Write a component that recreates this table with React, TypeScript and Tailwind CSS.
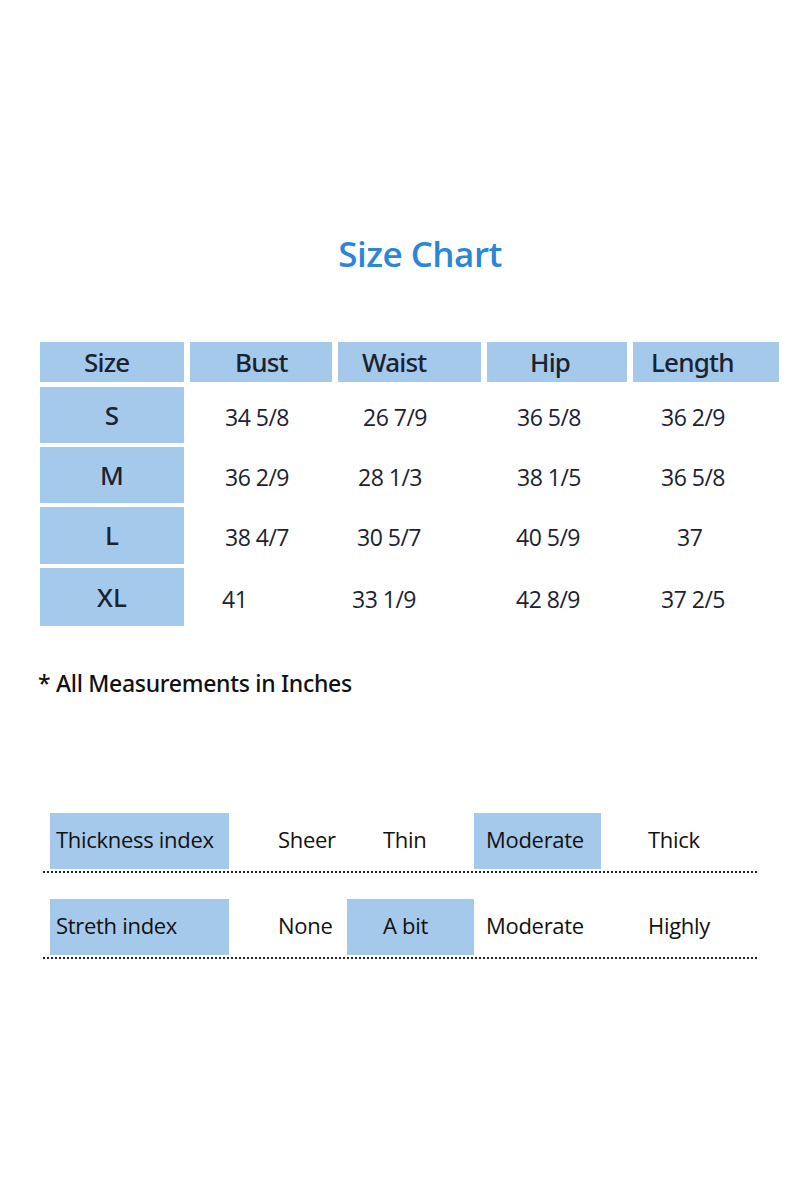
import React from 'react';

const headers = [
    { label: 'Size', w: 'w-[144px]', pl: 44 },
    { label: 'Bust', w: 'w-[142px]', pl: 45 },
    { label: 'Waist', w: 'w-[143px]', pl: 24 },
    { label: 'Hip', w: 'w-[140px]', pl: 43 },
    { label: 'Length', w: 'w-[146px]', pl: 18 },
];

// values keep the slightly uneven placement of the original chart
const rows = [
    { size: 'S', h: 'h-[56px]', cells: [['34 5/8', 35], ['26 7/9', 25], ['36 5/8', 30], ['36 2/9', 28]] },
    { size: 'M', h: 'h-[56px]', cells: [['36 2/9', 35], ['28 1/3', 20], ['38 1/5', 30], ['36 5/8', 28]] },
    { size: 'L', h: 'h-[57px]', cells: [['38 4/7', 35], ['30 5/7', 19], ['40 5/9', 29], ['37', 44]] },
    { size: 'XL', h: 'h-[58px]', cells: [['41', 32], ['33 1/9', 14], ['42 8/9', 29], ['37 2/5', 28]] },
];

const indexCols = ['w-[179px] pl-[6px]', 'w-[118px] pl-[49px]', 'w-[127px] pl-[36px]', 'w-[127px] pl-[12px]', 'flex-1 pl-[47px]'];

const indexRows = [
    { items: ['Thickness index', 'Sheer', 'Thin', 'Moderate', 'Thick'], active: [0, 3] },
    { items: ['Streth index', 'None', 'A bit', 'Moderate', 'Highly'], active: [0, 2] },
];

const App: React.FC = () => {
    return (
        <div className="w-[800px] h-[1200px] bg-white font-['Open_Sans','Noto_Sans',sans-serif] overflow-hidden">
            {/* Title */}
            <div className="pt-[229px] h-[280px] pl-[40px] flex justify-center">
                <h1 className="text-[35px] leading-[50px] font-semibold text-[#2b86d8] tracking-[-0.5px]">Size Chart</h1>
            </div>

            {/* Size table */}
            <div className="mt-[62px] ml-[40px] flex flex-col">
                <div className="flex gap-[6px] h-[40px]">
                    {headers.map((h) => (
                        <div key={h.label} className={`${h.w} bg-[#a5c9ea] flex items-center font-['Noto_Sans',sans-serif] text-[26px] font-medium text-[#1b2230] tracking-[-0.8px]`}>
                            <span style={{ paddingLeft: h.pl }}>{h.label}</span>
                        </div>
                    ))}
                </div>
                <div className="mt-[5px] flex flex-col gap-[4px]">
                    {rows.map((r) => (
                        <div key={r.size} className={`flex ${r.h}`}>
                            <div className="w-[144px] bg-[#a5c9ea] flex items-center justify-center font-['Noto_Sans',sans-serif] text-[26px] font-medium text-[#1b2230]">
                                {r.size}
                            </div>
                            {r.cells.map(([v, pl], i) => (
                                <div
                                    key={i}
                                    className={`${['w-[148px] ml-[6px]', 'w-[149px]', 'w-[146px]', 'w-[146px]'][i]} flex items-center pt-[4px] text-[23px] text-[#1b2230] tracking-[-0.5px]`}
                                >
                                    <span style={{ paddingLeft: pl }}>{v}</span>
                                </div>
                            ))}
                        </div>
                    ))}
                </div>
            </div>

            <p className="mt-[40px] ml-[38px] font-['Noto_Sans',sans-serif] text-[23px] font-medium text-[#111] tracking-[-0.3px]">* All Measurements in Inches</p>

            {/* Fabric indexes */}
            <div className="mt-[112px] flex flex-col">
                {indexRows.map((row, ri) => (
                    <div key={ri} className={ri === 0 ? '' : 'mt-[26px]'}>
                        <div className="ml-[50px] flex h-[56px]">
                            {row.items.map((t, i) => (
                                <div
                                    key={t + i}
                                    className={`${indexCols[i]} flex items-center pb-[2px] text-[22px] text-[#111] tracking-[-0.3px] ${row.active.includes(i) ? 'bg-[#a5c9ea]' : ''}`}
                                >
                                    {t}
                                </div>
                            ))}
                        </div>
                        <div className="ml-[43px] w-[714px] mt-[2px] border-b-[2px] border-dotted border-[#222]" />
                    </div>
                ))}
            </div>
        </div>
    );
};

export default App;
